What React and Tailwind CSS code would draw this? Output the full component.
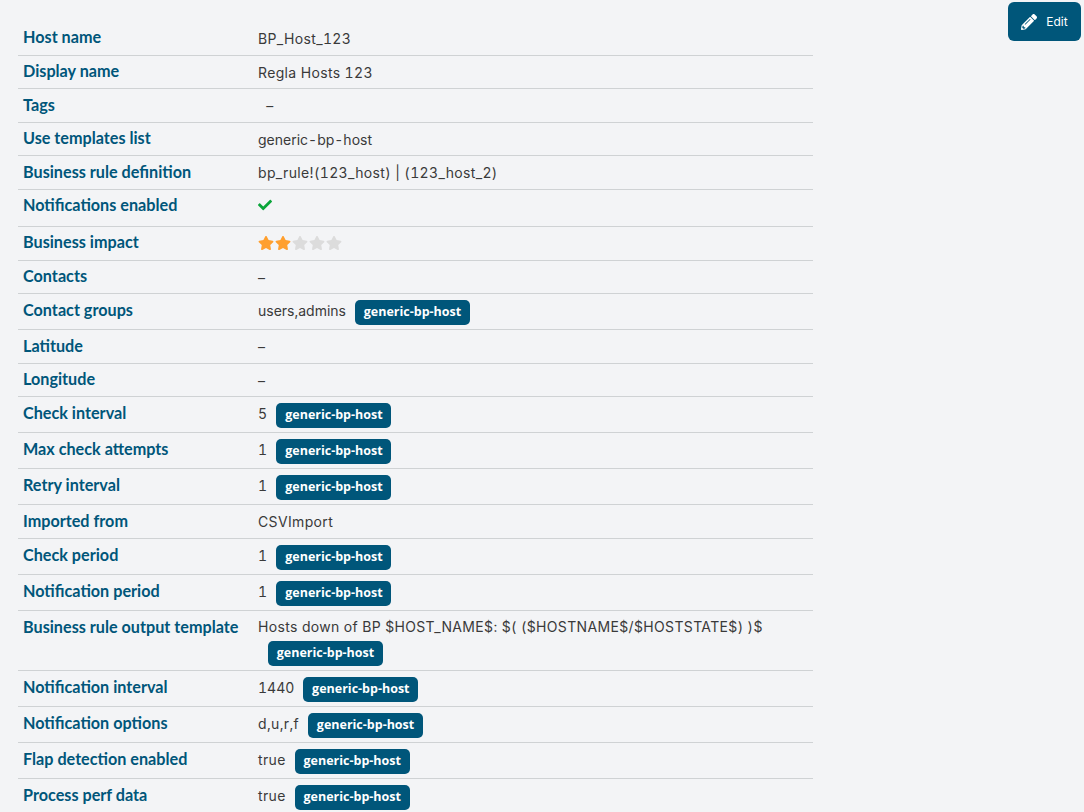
import { FaCheck, FaPencilAlt, FaStar } from 'react-icons/fa'

const ROWS = [
  { label: 'Host name', value: 'BP_Host_123', h: 'h-[34px]' },
  { label: 'Display name', value: 'Regla Hosts 123', h: 'h-[33.5px]' },
  { label: 'Tags', value: '\u00a0\u00a0–', h: 'h-[33.5px]' },
  { label: 'Use templates list', value: 'generic-bp-host', h: 'h-[33.5px]', narrow: true },
  { label: 'Business rule definition', value: 'bp_rule!(123_host) | (123_host_2)', h: 'h-[33.5px]' },
  { label: 'Notifications enabled', check: true, h: 'h-[37px]' },
  { label: 'Business impact', stars: 2, h: 'h-[34px]' },
  { label: 'Contacts', value: '–', h: 'h-[33.5px]' },
  { label: 'Contact groups', value: 'users,admins', badge: true, h: 'h-[36px]', narrow: true },
  { label: 'Latitude', value: '–', h: 'h-[33.5px]' },
  { label: 'Longitude', value: '–', h: 'h-[33.5px]' },
  { label: 'Check interval', value: '5', badge: true, h: 'h-[36px]' },
  { label: 'Max check attempts', value: '1', badge: true, h: 'h-[36px]' },
  { label: 'Retry interval', value: '1', badge: true, h: 'h-[36px]' },
  { label: 'Imported from', value: 'CSVImport', h: 'h-[34px]' },
  { label: 'Check period', value: '1', badge: true, h: 'h-[36px]' },
  { label: 'Notification period', value: '1', badge: true, h: 'h-[36px]' },
  { label: 'Business rule output template', value: 'Hosts down of BP $HOST_NAME$: $( ($HOSTNAME$/$HOSTSTATE$) )$', badge: true, wrap: true, h: 'h-[60px]' },
  { label: 'Notification interval', value: '1440', badge: true, h: 'h-[36px]', narrow: true },
  { label: 'Notification options', value: 'd,u,r,f', badge: true, h: 'h-[36px]' },
  { label: 'Flap detection enabled', value: 'true', badge: true, h: 'h-[36px]' },
  { label: 'Process perf data', value: 'true', badge: true, h: 'h-[36px]' },
]

function Badge() {
  return (
    <span className="inline-flex h-[25px] w-[115px] items-center justify-center rounded-[5px] bg-[#00567a] font-['Open_Sans',sans-serif] text-[12.5px] font-bold tracking-normal text-white">
      generic-bp-host
    </span>
  )
}

function Value({ row }) {
  if (row.check) {
    return <FaCheck className="mt-[2px] h-[14px] w-[14px] text-[#0aa53a]" />
  }
  if (row.stars !== undefined) {
    return (
      <div className="flex gap-[1px] pt-[2px]">
        {[0, 1, 2, 3, 4].map(i => (
          <FaStar key={i} className={`h-4 w-4 ${i < row.stars ? 'text-[#ff9f2e]' : 'text-[#dcdcdc]'}`} />
        ))}
      </div>
    )
  }
  if (row.wrap) {
    return (
      <div className="-mt-[1px]">
        <div>{row.value}</div>
        <div className="mt-[4px] pl-[10px]"><Badge /></div>
      </div>
    )
  }
  return (
    <div className="flex items-start gap-[9px]">
      <span className={row.narrow ? 'tracking-normal' : ''}>{row.value}</span>
      {row.badge && <Badge />}
    </div>
  )
}

export default function App() {
  return (
    <div className="h-[812px] overflow-hidden bg-[#f3f4f6] font-['Inter','Liberation_Sans',sans-serif] text-[14px] text-[#3a3a3a]">
      <div className="flex items-start justify-between pl-[18px] pr-[3px] pt-[2px]">
        <div className="mt-[19.5px] w-[795px]">
          {ROWS.map(row => (
            <div key={row.label} className={`flex items-start border-b border-[#cfd2d4] ${row.h}`}>
              <div className="w-[240px] pl-[5px] pt-[3.5px] font-['Lato',sans-serif] text-[16.2px] font-bold text-[#00567a]">{row.label}</div>
              <div className="flex-1 pt-[6px] tracking-[0.35px] tabular-nums"><Value row={row} /></div>
            </div>
          ))}
        </div>
        <button className="flex h-[39px] w-[73px] items-center justify-center gap-[9px] rounded-md bg-[#00567a] text-[12px] text-white">
          <FaPencilAlt className="h-4 w-4" />
          Edit
        </button>
      </div>
    </div>
  )
}
